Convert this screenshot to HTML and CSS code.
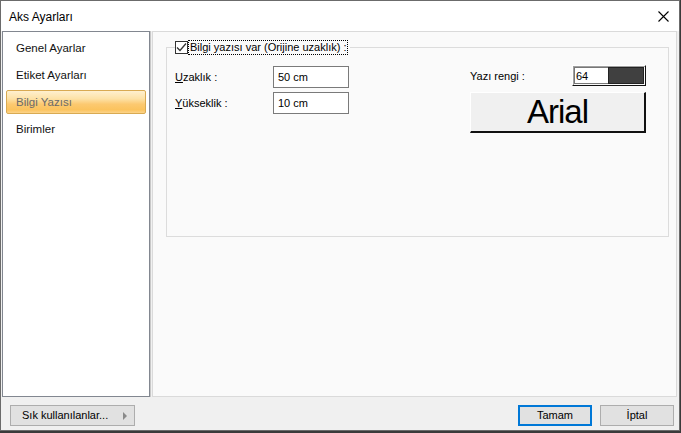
FILE: index.html
```html
<!DOCTYPE html>
<html lang="tr">
<head>
    <meta charset="UTF-8">
    <title>Aks Ayarları</title>
    <link rel="stylesheet" href="styles.css">
</head>
<body>
    <div class="window">
        <!-- Title bar -->
        <div class="titlebar">
            <span class="title">Aks Ayarları</span>
            <svg class="close" width="11" height="11" viewBox="0 0 11 11">
                <path d="M0.5 0.5 L10.5 10.5 M10.5 0.5 L0.5 10.5" stroke="#000" stroke-width="1.1" fill="none"/>
            </svg>
        </div>

        <!-- Main area -->
        <div class="main">
            <ul class="nav-list">
                <li>Genel Ayarlar</li>
                <li>Etiket Ayarları</li>
                <li class="selected">Bilgi Yazısı</li>
                <li>Birimler</li>
            </ul>

            <div class="page">
                <fieldset class="group">
                    <legend>
                        <span class="check">
                            <svg width="11" height="11" viewBox="0 0 11 11">
                                <path d="M1 5.5 L4 8.5 L10 1.5" stroke="#333" stroke-width="1.3" fill="none"/>
                            </svg>
                        </span>
                        <span class="focus-text">Bilgi yazısı var (Orijine uzaklık) :</span>
                    </legend>

                    <div class="group-body">
                        <div class="fields">
                            <div class="field">
                                <label><u>U</u>zaklık :</label>
                                <div class="input">50 cm</div>
                            </div>
                            <div class="field">
                                <label><u>Y</u>ükseklik :</label>
                                <div class="input">10 cm</div>
                            </div>
                        </div>

                        <div class="text-style">
                            <div class="color-row">
                                <label>Yazı rengi :</label>
                                <div class="color-box">
                                    <span class="color-num">64</span>
                                    <span class="swatch"></span>
                                </div>
                            </div>
                            <div class="font-button">Arial</div>
                        </div>
                    </div>
                </fieldset>
            </div>
        </div>

        <!-- Footer buttons -->
        <div class="footer">
            <div class="button fav">Sık kullanılanlar...<span class="arrow"></span></div>
            <div class="footer-right">
                <div class="button default">Tamam</div>
                <div class="button">İptal</div>
            </div>
        </div>
    </div>
</body>
</html>
```

FILE: styles.css
```css
/* General */
body {
    margin: 0;
    background: #3a3a3a;
    font-family: "Liberation Sans", Arial, sans-serif;
    font-size: 11px;
    color: #000;
}

.window {
    width: 680px;
    height: 431px;
    box-sizing: border-box;
    border: 1px solid #6b6b6b;
    background: #f0f0f0;
    display: flex;
    flex-direction: column;
}

/* Title bar */
.titlebar {
    height: 30px;
    background: #fff;
    display: flex;
    align-items: center;
    justify-content: space-between;
    padding: 0 10px 0 8px;
    flex-shrink: 0;
}

.title {
    font-size: 12px;
    margin-top: 1px;
}

/* Main */
.main {
    display: flex;
    height: 366px;
    padding: 0 2px 0 1px;
    flex-shrink: 0;
}

.nav-list {
    list-style: none;
    margin: 0;
    padding: 4px 3px 0 3px;
    width: 148px;
    box-sizing: border-box;
    background: #fff;
    border: 1px solid #828790;
    box-shadow: 1px 0 0 #c8c8c8;
}

.nav-list li {
    height: 22px;
    line-height: 22px;
    padding-left: 9px;
    margin-bottom: 3px;
    border: 1px solid transparent;
    color: #111;
    font-size: 11.5px;
}

.nav-list li.selected {
    color: #6a6a6a;
    border-color: #d9aa52;
    border-radius: 2px;
    background: linear-gradient(#fff0cf, #fde2a7 35%, #fcc970 60%, #fbc35e 85%, #fcd48a);
}

.page {
    flex: 1;
    margin-left: 2px;
    background: #fafafa;
    border: 1px solid #dadada;
    padding: 9px 7px 0 13px;
}

/* Group box */
.group {
    margin: 0;
    height: 196px;
    box-sizing: border-box;
    border: 1px solid #dcdcdc;
    padding: 0 22px 0 8px;
}

.group legend {
    padding: 0 3px 0 0;
    display: flex;
    align-items: center;
    gap: 1px;
}

.check {
    width: 11px;
    height: 11px;
    border: 1px solid #333;
    background: #fff;
    display: flex;
}

.focus-text {
    outline: 1px dotted #000;
    outline-offset: 0;
    padding: 0 1px;
    line-height: 13px;
}

.group-body {
    display: flex;
    justify-content: space-between;
    padding-top: 12px;
}

.fields {
    display: flex;
    flex-direction: column;
    gap: 4px;
}

.field {
    display: flex;
    align-items: center;
}

.field label {
    width: 98px;
}

.input {
    width: 70px;
    height: 20px;
    line-height: 20px;
    border: 1px solid #7a7a7a;
    background: #fff;
    padding-left: 4px;
}

/* Text colour + font */
.text-style {
    width: 176px;
    display: flex;
    flex-direction: column;
    gap: 6px;
    margin-top: -1px;
}

.color-row {
    display: flex;
    align-items: center;
    justify-content: space-between;
}

.color-box {
    display: flex;
    width: 74px;
    height: 21px;
    box-sizing: border-box;
    border: 1px solid #fff;
    border-right-color: #111;
    border-bottom-color: #111;
    box-shadow: inset 1px 1px 0 #a0a0a0;
    padding: 1px;
}

.color-num {
    width: 32px;
    background: #fff;
    border: 1px solid #777;
    border-right: none;
    line-height: 17px;
    padding-left: 1px;
}

.swatch {
    flex: 1;
    background: #404040;
    border: 1px solid #222;
}

.font-button {
    height: 41px;
    box-sizing: border-box;
    background: #f0f0f0;
    border: 1px solid #fff;
    border-right: 2px solid #111;
    border-bottom: 2px solid #111;
    text-align: center;
    font-size: 33px;
    letter-spacing: -1px;
    line-height: 38px;
}

/* Footer */
.footer {
    flex: 1;
    display: flex;
    justify-content: space-between;
    align-items: flex-start;
    padding: 8px 5px 0 9px;
}

.footer-right {
    display: flex;
    gap: 8px;
}

.button {
    height: 21px;
    box-sizing: border-box;
    width: 74px;
    border: 1px solid #adadad;
    background: #e1e1e1;
    text-align: center;
    line-height: 19px;
}

.button.default {
    border: 2px solid #0078d7;
    line-height: 17px;
}

.button.fav {
    width: 125px;
    text-align: left;
    padding-left: 11px;
    position: relative;
}

.arrow {
    position: absolute;
    right: 7px;
    top: 6px;
    border-left: 4px solid #8a8a8a;
    border-top: 4px solid transparent;
    border-bottom: 4px solid transparent;
}
```
